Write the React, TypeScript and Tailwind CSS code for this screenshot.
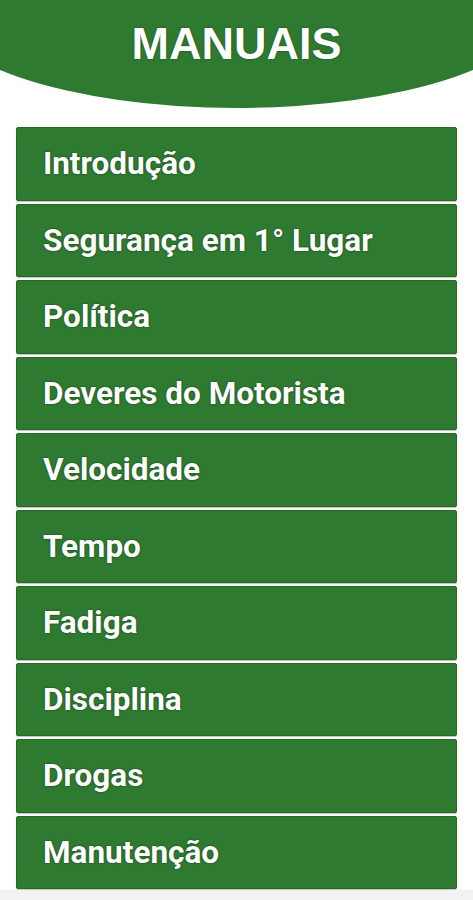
import React from 'react';

const items = [
  'Introdução',
  'Segurança em 1° Lugar',
  'Política',
  'Deveres do Motorista',
  'Velocidade',
  'Tempo',
  'Fadiga',
  'Disciplina',
  'Drogas',
  'Manutenção',
];

const MenuButton: React.FC<{ label: string }> = ({ label }) => (
  <button className="h-[73.5px] w-full flex items-center pl-[26px] bg-[#2e7a30] border border-[#236b25] rounded-[2px] shadow-[0_1px_1px_rgba(0,0,0,0.25)] text-left">
    <span className="text-white font-bold text-[31.5px] font-['Roboto',sans-serif] [text-shadow:0_0_2px_rgba(0,0,0,0.6)]">
      {label}
    </span>
  </button>
);

export default function App() {
  return (
    <div className="w-full h-[900px] bg-white overflow-hidden flex flex-col">
      <header className="overflow-hidden shrink-0">
        <div className="-mx-[71px] h-[108px] bg-[#2e7a30] rounded-bl-[50%_105px] rounded-br-[50%_105px] flex justify-center pt-[21px]">
          <h1 className="text-white font-bold text-[45px] leading-none font-['Liberation_Sans',Arial,sans-serif] [text-shadow:0_0_2px_rgba(0,0,0,0.5)]">
            MANUAIS
          </h1>
        </div>
      </header>

      <nav className="mt-[19px] px-[16px] flex flex-col gap-[3px]">
        {items.map((item) => (
          <MenuButton key={item} label={item} />
        ))}
      </nav>

      <div className="mt-auto h-[10px] bg-[#f2f2f2]" />
    </div>
  );
}
